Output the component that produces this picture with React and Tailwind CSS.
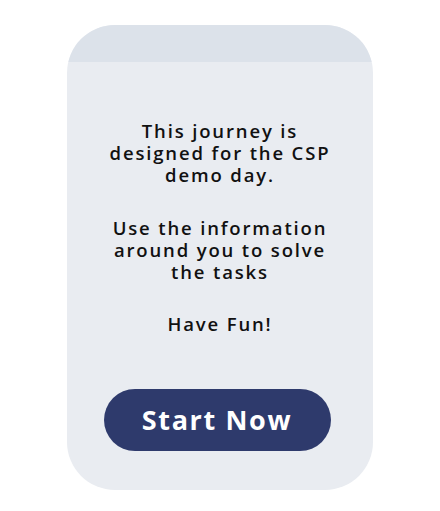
import React from "react";

const App = () => {
  return (
    <div className="min-h-screen bg-white flex justify-center pt-[25px]" style={{ fontFamily: "'Open Sans', Lato, sans-serif" }}>
      <div className="w-[306px] h-[465px] flex flex-col rounded-[48px] overflow-hidden bg-[#e9ecf1]">
        {/* header strip */}
        <div className="h-[37px] bg-[#dce2ea]" />

        <div className="flex flex-col items-center pt-[58px] text-center text-[18.5px] leading-[22px] tracking-[0.1em] font-semibold text-[#111] whitespace-nowrap">
          <p>
            This journey is
            <br />
            designed for the CSP
            <br />
            demo day.
          </p>
          <p className="mt-[31px]">
            Use the information
            <br />
            around you to solve
            <br />
            the tasks
          </p>
          <p className="mt-[30px]">Have Fun!</p>

          <button className="mt-[54px] mr-[6px] w-[227px] h-[62px] rounded-full bg-[#2e3a6c] text-white text-[27px] font-bold tracking-[0.06em]">
            Start Now
          </button>
        </div>
      </div>
    </div>
  );
};

export default App;
